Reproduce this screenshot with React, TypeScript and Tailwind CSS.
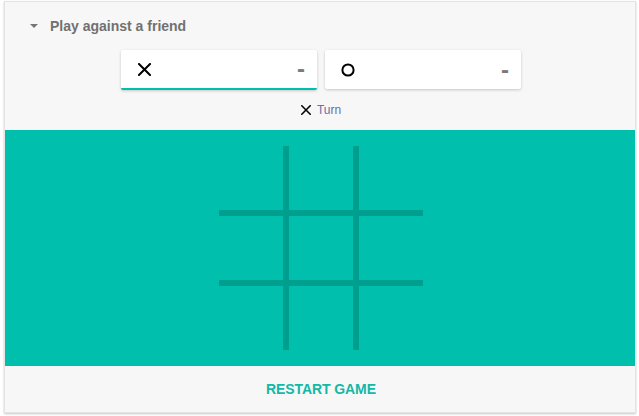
import React from "react";

const XIcon = ({ size = 13, stroke = 2 }: { size?: number; stroke?: number }) => (
  <svg width={size} height={size} viewBox="0 0 13 13">
    <path d="M1 1 L12 12 M12 1 L1 12" stroke="#000" strokeWidth={stroke} strokeLinecap="square" fill="none" />
  </svg>
);

const OIcon = () => (
  <svg width={14} height={14} viewBox="0 0 14 14">
    <circle cx="7" cy="7" r="5.6" stroke="#000" strokeWidth={2} fill="none" />
  </svg>
);

export default function App() {
  const cells = Array.from({ length: 9 });
  return (
    <div className="min-h-screen bg-white pt-[1px] pl-[4px]" style={{ fontFamily: '"Liberation Sans", Arial, sans-serif' }}>
      <div className="w-[632px] h-[412px] bg-[#f7f7f7] border border-[#e4e4e4] shadow-[0_1px_2px_rgba(0,0,0,0.22)] flex flex-col">
        <div className="h-[48px] flex items-center pl-[25px]">
          <div className="w-0 h-0 border-l-[4px] border-r-[4px] border-t-[4px] border-l-transparent border-r-transparent border-t-[#757575]" />
          <span className="ml-[12px] text-[14px] font-bold text-[#717171]">Play against a friend</span>
        </div>
        <div className="h-[40px] flex justify-center gap-[8px] pl-[2px]">
          <div className="w-[196px] h-[40px] bg-white rounded-[2px] shadow-[0_1px_3px_rgba(0,0,0,0.2)] border-b-2 border-[#00bfad] flex items-center justify-between pl-[17px] pr-[12px] pt-[1px]">
            <XIcon />
            <span className="text-[24px] font-bold text-[#7a7a7a] leading-none pb-[1px]">-</span>
          </div>
          <div className="w-[196px] h-[39px] bg-white rounded-[2px] shadow-[0_1px_3px_rgba(0,0,0,0.2)] flex items-center justify-between pl-[16px] pr-[12px] pt-[1px]">
            <OIcon />
            <span className="text-[24px] font-bold text-[#7a7a7a] leading-none pb-[1px]">-</span>
          </div>
        </div>
        <div className="h-[40px] flex items-center justify-center gap-[6px] pl-[2px]">
          <XIcon size={10} stroke={2} />
          <span className="text-[12px] text-[#6a70a3]">Turn</span>
        </div>
        <div className="h-[236px] bg-[#00bfad] flex items-center justify-center pl-[2px]">
          <div className="grid grid-cols-[64px_64px_64px] grid-rows-[64px_64px_64px] gap-[6px] bg-[#009e8f]">
            {cells.map((_, i) => (
              <div key={i} className="bg-[#00bfad]" />
            ))}
          </div>
        </div>
        <div className="flex-1 flex items-center justify-center pl-[2px]">
          <span className="text-[14px] font-bold text-[#13b8a6] tracking-[-0.1px]">RESTART GAME</span>
        </div>
      </div>
    </div>
  );
}
